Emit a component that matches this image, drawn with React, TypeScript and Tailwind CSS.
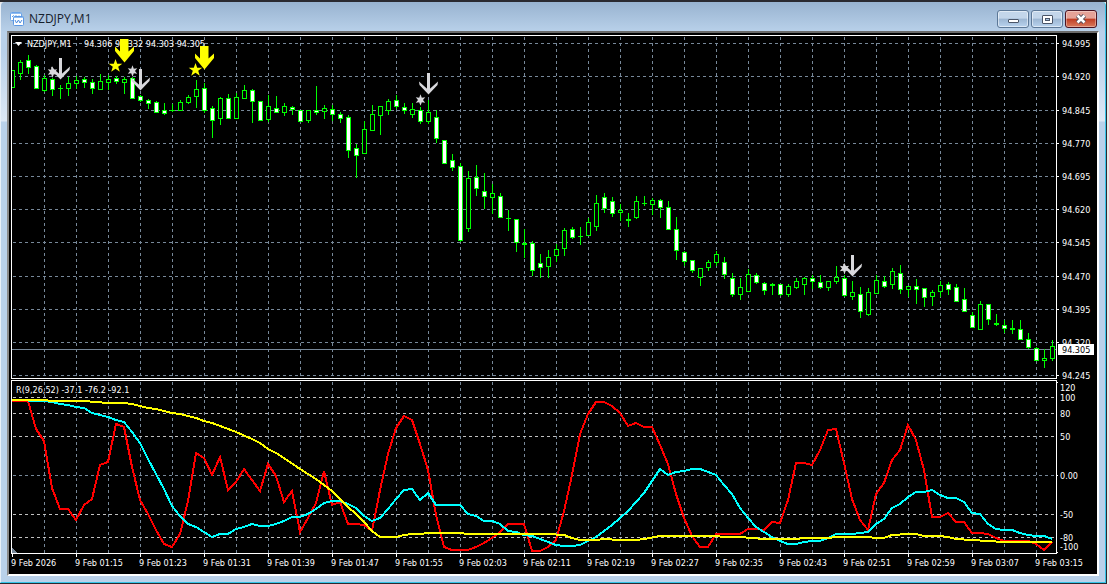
import React from "react";

const GRID = "#778899";
const LIME = "#00ff00";
const LABEL = "fill-white font-['DejaVu_Sans_Condensed','DejaVu_Sans',sans-serif] text-[9px]";

// [high, body top, body bottom, low, kind]; kind: 0 = rising, 1 = falling
const candles: number[][] = [
  [70, 70, 87, 87, 0], [60, 62, 73, 79, 0], [55, 60, 67, 73, 1], [65, 66, 88, 88, 1], [75, 78, 90, 91, 0],
  [78, 79, 89, 95, 1], [85, 88, 88, 98, 1], [77, 83, 88, 95, 0], [76, 80, 83, 88, 0], [77, 79, 82, 87, 1],
  [79, 82, 88, 93, 1], [74, 81, 89, 89, 0], [75, 79, 82, 89, 0], [76, 78, 81, 83, 1], [77, 79, 82, 93, 0],
  [77, 78, 98, 98, 1], [95, 96, 100, 101, 1], [99, 100, 103, 108, 1], [101, 102, 112, 112, 1], [103, 110, 113, 114, 1],
  [104, 110, 110, 111, 1], [100, 102, 110, 110, 0], [95, 97, 102, 103, 0], [80, 89, 96, 107, 0], [83, 88, 110, 112, 1],
  [106, 108, 120, 137, 1], [97, 98, 118, 124, 0], [94, 98, 118, 118, 1], [93, 97, 118, 118, 0], [85, 90, 98, 98, 0],
  [89, 90, 101, 122, 1], [101, 101, 120, 120, 1], [95, 106, 119, 121, 0], [96, 108, 112, 112, 1], [103, 106, 112, 115, 0],
  [106, 107, 109, 114, 1], [110, 110, 121, 121, 1], [110, 110, 120, 122, 0], [86, 110, 112, 114, 1], [105, 108, 111, 118, 0],
  [105, 109, 114, 120, 1], [112, 114, 118, 122, 1], [115, 117, 150, 157, 1], [144, 148, 155, 177, 1], [121, 129, 153, 153, 0],
  [105, 114, 130, 130, 0], [106, 106, 115, 134, 0], [99, 101, 110, 114, 0], [95, 100, 106, 108, 1], [103, 107, 110, 113, 1],
  [103, 109, 114, 117, 0], [107, 110, 121, 123, 1], [100, 112, 121, 123, 0], [110, 117, 138, 142, 1], [140, 140, 163, 163, 1],
  [154, 160, 167, 170, 1], [163, 166, 240, 241, 1], [171, 178, 228, 231, 0], [165, 177, 188, 195, 1], [173, 191, 196, 208, 1],
  [184, 193, 197, 213, 0], [193, 196, 217, 217, 1], [210, 218, 218, 230, 1], [219, 219, 242, 251, 1], [229, 243, 244, 257, 1],
  [241, 243, 270, 275, 1], [254, 263, 267, 277, 1], [250, 257, 266, 277, 0], [244, 249, 255, 261, 0], [228, 230, 248, 255, 0],
  [227, 229, 237, 238, 1], [227, 236, 236, 244, 1], [218, 222, 235, 235, 0], [195, 203, 226, 230, 0], [193, 197, 208, 212, 1],
  [197, 201, 213, 216, 1], [204, 210, 212, 220, 0], [213, 219, 220, 226, 1], [196, 201, 217, 218, 0], [196, 203, 203, 205, 1],
  [198, 200, 204, 214, 0], [199, 200, 207, 217, 1], [201, 207, 229, 229, 1], [217, 229, 250, 259, 1], [251, 252, 261, 265, 1],
  [260, 260, 270, 272, 1], [268, 268, 277, 285, 0], [260, 262, 267, 270, 0], [251, 254, 262, 265, 0], [257, 262, 274, 278, 1],
  [273, 278, 294, 296, 1], [278, 287, 294, 299, 0], [269, 274, 291, 291, 0], [273, 275, 282, 283, 1], [282, 283, 290, 294, 1],
  [283, 284, 285, 294, 1], [284, 284, 294, 295, 1], [284, 286, 294, 296, 0], [278, 281, 287, 288, 0], [277, 278, 284, 294, 0],
  [275, 278, 281, 288, 1], [275, 282, 287, 288, 1], [281, 281, 287, 290, 0], [266, 277, 281, 283, 0], [275, 278, 295, 296, 1],
  [281, 292, 296, 299, 0], [287, 294, 311, 317, 1], [288, 292, 314, 315, 0], [275, 280, 293, 293, 0], [276, 281, 286, 287, 1],
  [268, 271, 284, 288, 0], [265, 273, 289, 293, 1], [286, 286, 289, 296, 0], [279, 286, 289, 303, 1], [288, 288, 297, 306, 1],
  [290, 292, 296, 305, 0], [281, 285, 291, 296, 0], [282, 284, 289, 294, 1], [284, 287, 301, 301, 1], [288, 299, 311, 311, 1],
  [312, 315, 327, 327, 1], [301, 304, 329, 329, 0], [304, 304, 319, 324, 1], [314, 323, 324, 325, 1], [320, 325, 328, 332, 1],
  [320, 328, 329, 333, 1], [320, 329, 339, 339, 1], [333, 339, 347, 348, 1], [347, 348, 360, 360, 1], [349, 358, 360, 367, 0],
  [340, 346, 358, 360, 0],
];

const fastLine =
  "12,401 28,401 36,429 44,441 52,488 60,509 68,509 76,520 84,505 92,499 100,465 108,462 116,424 124,427 132,467 140,500 148,514 156,530 164,544 172,547 180,534 188,501 196,453 204,458 212,475 220,457 228,490 236,482 244,469 252,480 260,491 268,464 276,476 284,502 292,491 300,532 308,518 316,503 324,471 332,505 340,502 348,524 356,524 364,525 372,531 380,490 388,454 396,428 404,416 412,420 420,444 428,470 436,515 444,547 452,550 460,550 468,550 476,547 484,543 492,538 500,532 508,524 516,524 524,524 532,551 540,551 548,547 556,540 564,511 572,475 580,434 588,414 596,402 604,402 612,406 620,413 628,426 636,423 644,427 652,427 660,445 668,464 676,494 684,518 692,536 700,547 708,547 716,534 740,534 748,529 756,529 764,530 772,522 780,523 788,500 796,463 804,463 812,465 820,450 828,430 836,429 844,463 852,499 860,520 868,530 876,494 884,483 892,460 900,450 908,425 916,440 924,470 932,517 940,517 948,513 956,522 964,522 972,533 980,533 988,534 996,538 1004,541 1028,541 1036,544 1044,550 1052,542";
const middleLine =
  "12,400 44,401 52,402 60,404 68,405 76,407 84,408 92,413 100,415 108,417 116,420 124,422 132,432 140,443 148,459 156,474 164,489 172,506 180,516 188,524 196,527 204,532 212,537 220,534 228,534 236,529 244,527 252,524 260,526 268,526 276,524 284,521 292,517 300,517 308,514 316,509 324,503 332,501 340,501 348,504 356,508 364,516 372,521 380,518 388,509 396,499 404,490 412,489 420,500 428,493 436,505 460,505 468,514 476,516 484,521 492,521 500,524 508,531 516,532 524,535 532,536 540,539 548,542 556,545 564,546 572,546 580,545 588,541 596,537 604,531 612,525 620,518 628,511 636,502 644,493 652,481 660,469 668,475 676,472 684,471 692,469 700,469 708,472 716,475 724,485 732,494 740,508 748,518 756,527 764,532 772,537 780,541 788,544 796,544 804,542 812,541 820,541 828,538 836,534 852,534 860,533 868,532 876,524 884,519 892,508 900,504 908,497 916,492 924,492 932,490 940,495 948,498 956,498 964,502 972,513 980,514 988,524 996,529 1004,530 1012,530 1020,533 1028,535 1036,536 1044,536 1052,539";
const slowLine =
  "12,400 44,400 52,401 84,401 108,403 124,403 132,404 140,406 148,408 156,409 172,413 180,414 196,418 204,421 212,423 220,426 236,432 252,439 260,443 268,449 276,453 284,458 300,469 316,479 332,491 340,499 348,507 356,514 364,522 372,531 380,537 396,537 404,535 412,534 436,533 460,533 468,534 548,534 564,535 572,538 580,540 596,540 604,539 620,540 636,540 644,539 660,536 716,536 724,537 740,537 764,539 796,539 804,538 828,538 836,537 868,537 876,538 884,538 892,535 908,534 916,534 924,536 940,536 948,537 956,539 972,540 988,541 1004,542 1052,542";

const prices: [number, string][] = [
  [43, "94.995"], [76, "94.920"], [110, "94.845"], [143, "94.770"], [176, "94.695"], [209, "94.620"],
  [242, "94.545"], [276, "94.470"], [309, "94.395"], [342, "94.320"], [375, "94.245"],
];
const levels: [number, string][] = [
  [387, "120"], [397, "100"], [413, "80"], [436, "50"], [475, "0.00"], [514, "-50"], [537, "-80"], [546, "-100"],
];
const times = [
  "9 Feb 2026", "9 Feb 01:15", "9 Feb 01:23", "9 Feb 01:31", "9 Feb 01:39", "9 Feb 01:47", "9 Feb 01:55", "9 Feb 02:03",
  "9 Feb 02:11", "9 Feb 02:19", "9 Feb 02:27", "9 Feb 02:35", "9 Feb 02:43", "9 Feb 02:51", "9 Feb 02:59", "9 Feb 03:07",
  "9 Feb 03:15",
];
const columns = Array.from({ length: 32 }, (_, i) => 44 + i * 32);

function HLine({ y, color = GRID }: { y: number; color?: string }) {
  return <path d={`M13 ${y + 0.5}H1056`} stroke={color} strokeDasharray="3 3" />;
}

function VLines({ from, to }: { from: number; to: number }) {
  return (
    <g stroke={GRID} strokeDasharray="3 3">
      {columns.map((x) => (
        <path key={x} d={`M${x + 0.5} ${from}V${to}`} />
      ))}
    </g>
  );
}

function Candle({ x, c }: { x: number; c: number[] }) {
  const [high, top, bottom, low, kind] = c;
  const h = bottom - top + 1;
  return (
    <g>
      <rect x={x} y={high} width={1} height={low - high + 1} fill={LIME} />
      <rect x={x - 2} y={top} width={5} height={h} fill={LIME} />
      {h > 2 && <rect x={x - 1} y={top + 1} width={3} height={h - 2} fill={kind ? "#fff" : "#000"} />}
    </g>
  );
}

function SilverArrow({ x, y }: { x: number; y: number }) {
  return (
    <g transform={`translate(${x} ${y})`} fill="#d8d8dc">
      <path d="M-1 0H2V17H-1Z" />
      <path d="M-9 8.5L-8.5 12L0.5 21.5L9.5 12L10 8.5L0.5 17Z" />
    </g>
  );
}

function SilverStar({ x, y }: { x: number; y: number }) {
  return (
    <path
      transform={`translate(${x} ${y})`}
      fill="#d8d8dc"
      d="M0.5 -5.8L1.8 -2.3L5.2 -2.8L3 0L5.2 2.8L1.8 2.3L0.5 5.8L-0.8 2.3L-4.2 2.8L-2 0L-4.2 -2.8L-0.8 -2.3Z"
    />
  );
}

function YellowArrow({ x, y }: { x: number; y: number }) {
  return (
    <path
      transform={`translate(${x} ${y})`}
      fill="#ffff00"
      d="M-4 0H4.5V12.5L10 7.5V12L0.5 23.5L-9 12V7.5L-4 12.5Z"
    />
  );
}

function YellowStar({ x, y }: { x: number; y: number }) {
  return (
    <path
      transform={`translate(${x} ${y})`}
      fill="#ffff00"
      d="M0 -7L1.7 -2.2H6.8L2.7 0.8L4.3 5.7L0 2.7L-4.3 5.7L-2.7 0.8L-6.8 -2.2H-1.7Z"
    />
  );
}

function PricePanel() {
  return (
    <svg
      viewBox="9 33 1088 346"
      className="block w-full overflow-visible"
      role="img"
      aria-label="NZDJPY one minute candlesticks"
    >
      <g shapeRendering="crispEdges" fill="none">
        <VLines from={37} to={378} />
        {prices.map(([y]) => (
          <HLine key={y} y={y} />
        ))}
        <path d="M12 349.5H1057" stroke={GRID} />
        {candles.map((c, i) => (
          <Candle key={i} x={12 + i * 8} c={c} />
        ))}
        <rect x="9" y="60" width="2" height="40" fill="#000" />
        <path d="M11.5 378.5V35.5H1056.5V378.5Z" stroke="#fff" />
        {prices.map(([y]) => (
          <path key={y} d={`M1057 ${y + 0.5}h2`} stroke="#fff" />
        ))}
      </g>
      <path d="M15 42H22L18.5 46Z" fill="#fff" />
      <g className={LABEL}>
        <text x="27" y="47">NZDJPY,M1</text>
        <text x="84" y="47">94.306 94.332 94.303 94.305</text>
        {prices.map(([y, t]) => (
          <text key={t} x="1062" y={y + 4}>{t}</text>
        ))}
      </g>
      <rect x="1058" y="344" width="36" height="11" fill="#fff" />
      <text x="1062" y="353" className="fill-black font-['DejaVu_Sans_Condensed','DejaVu_Sans',sans-serif] text-[9px]">
        94.305
      </text>
      <SilverStar x={52} y={72} />
      <SilverArrow x={60} y={58} />
      <YellowStar x={115.5} y={66} />
      <YellowArrow x={124} y={39} />
      <SilverStar x={132} y={71} />
      <SilverArrow x={140} y={69} />
      <YellowStar x={195.5} y={70} />
      <YellowArrow x={204} y={46} />
      <SilverStar x={420} y={100} />
      <SilverArrow x={428} y={73} />
      <SilverStar x={844} y={268.5} />
      <SilverArrow x={852} y={255} />
    </svg>
  );
}

function OscillatorPanel() {
  return (
    <svg viewBox="9 379 1088 175" className="block w-full" role="img" aria-label="Percent range oscillator">
      <g shapeRendering="crispEdges" fill="none">
        <VLines from={382} to={553} />
        <HLine y={475} />
        {[397, 413, 436, 514, 537].map((y) => (
          <HLine key={y} y={y} color="#c0c0c0" />
        ))}
        <path d="M12 547.5V553H17.5Z" fill={GRID} />
        <polyline points={fastLine} stroke="#ff0000" strokeWidth="2" />
        <polyline points={middleLine} stroke="#00ffff" strokeWidth="2" />
        <polyline points={slowLine} stroke="#ffff00" strokeWidth="2" />
        <path d="M11.5 380.5H1056.5V553.5H11.5Z" stroke="#fff" />
        <path d="M1057 382.5h1M1057 475.5h1M1057 552.5h1" stroke="#fff" />
      </g>
      <g className={LABEL}>
        <text x="16" y="393">R(9,26,52) -37.1 -76.2 -92.1</text>
        {levels.map(([y, t]) => (
          <text key={t} x="1060" y={y + 4}>{t}</text>
        ))}
      </g>
    </svg>
  );
}

function TimeAxis() {
  return (
    <svg viewBox="9 554 1088 20" className="block w-full" role="img" aria-label="Time axis">
      {times.map((t, i) => (
        <g key={t}>
          <rect x={12 + i * 64} y="554" width="1" height="3" fill="#fff" />
          <text x={11 + i * 64} y="566" className={LABEL}>{t}</text>
        </g>
      ))}
    </svg>
  );
}

function WindowIcon() {
  return (
    <svg viewBox="0 0 14 14" className="size-3.5" aria-hidden="true">
      <rect x="0.5" y="0.5" width="11" height="8" rx="1" fill="#fff" stroke="#6aa3e8" />
      <path d="M1 1.5H11" stroke="#8fbcf2" />
      <path d="M2 5L3.5 3.5L5 5L6 3.5L7.5 5L9 3.5" stroke="#5b9be6" fill="none" />
      <rect x="3.5" y="4.5" width="10" height="9" rx="1" fill="#fff" stroke="#5b97e2" />
      <path d="M4 5.5H13" stroke="#8fbcf2" />
      <path d="M5 8L6.5 11L8.5 8L10 11L12 8" stroke="#4a8be0" fill="none" />
    </svg>
  );
}

const glass =
  "flex h-[18px] w-8 items-center justify-center rounded-[3px] border border-[#5c7897] bg-linear-to-b from-[#c3d6ea] from-45% via-[#9cb6d2] via-50% to-[#b9d3ee] shadow-[inset_0_0_0_1px_rgba(255,255,255,0.5)]";

export default function App() {
  return (
    <main className="flex min-h-screen flex-col bg-[#e8e8e8] pr-[2px]">
      <div className="flex grow flex-col border-t-2 border-r border-b border-[#2a2a30]">
        <div className="flex grow flex-col rounded-t border-r border-b border-l border-r-[#35c4e8] border-b-[#35c4e8] border-l-[#e8f0f8] bg-[linear-gradient(to_bottom,#98b3d0_0px,#b9d1ea_30px,#b9d1ea_50px,#dde8f5_119px,#b9d1ea_120px)]">
          <header className="flex h-[29px] items-center justify-between pt-[5px] pr-2 pl-[9px]">
            <h1 className="flex items-center gap-[5px] font-['Open_Sans','Noto_Sans',sans-serif] text-xs text-[#16202c]">
              <WindowIcon />
              NZDJPY,M1
            </h1>
            <div className="flex gap-[2px]">
              <button type="button" aria-label="Minimize" className={glass}>
                <span className="mt-1 h-1 w-[11px] rounded-[1px] border border-[#4a5568] bg-white" />
              </button>
              <button type="button" aria-label="Maximize" className={glass}>
                <span className="flex h-[9px] w-[11px] items-center justify-center rounded-[1px] border border-[#4a5568] bg-white">
                  <span className="h-[3px] w-[5px] border border-[#4a5568] bg-[#a9c4e0]" />
                </span>
              </button>
              <button
                type="button"
                aria-label="Close"
                className="flex h-[18px] w-8 items-center justify-center rounded-[3px] border border-[#4c1320] bg-linear-to-b from-[#e5a297] from-45% via-[#bf3c22] via-50% to-[#d9795c] shadow-[inset_0_0_0_1px_rgba(255,255,255,0.35)]"
              >
                <svg viewBox="0 0 12 10" className="h-2.5 w-3" aria-hidden="true">
                  <path d="M2.5 1.5L9.5 8.5M9.5 1.5L2.5 8.5" stroke="#4a4a58" strokeWidth="4.4" />
                  <path d="M2.5 1.5L9.5 8.5M9.5 1.5L2.5 8.5" stroke="#fff" strokeWidth="2.6" />
                </svg>
              </button>
            </div>
          </header>
          <section className="mr-[6px] mb-[6px] ml-[6px] grow border-2 border-t-[#6a6a6a] border-r-white border-b-white border-l-[#8a8a8a] bg-black">
            <PricePanel />
            <OscillatorPanel />
            <TimeAxis />
          </section>
        </div>
      </div>
    </main>
  );
}
